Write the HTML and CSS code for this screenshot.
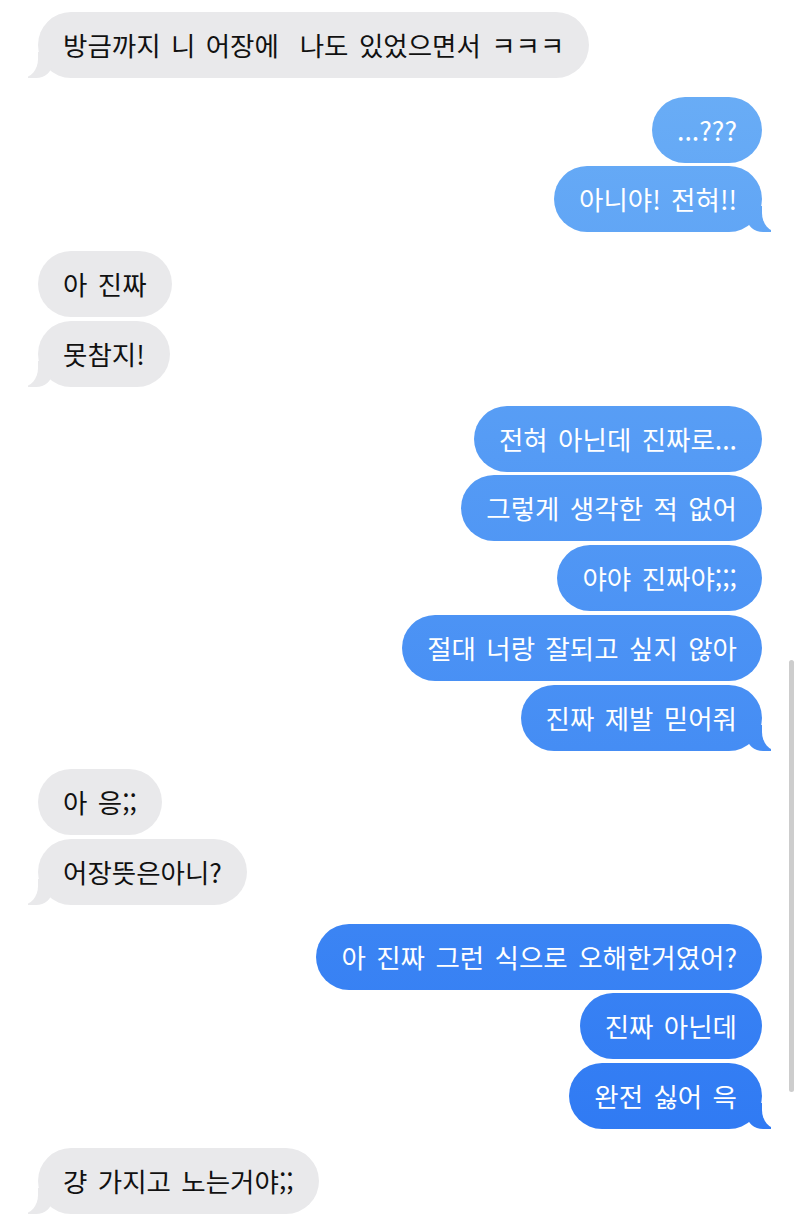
FILE: index.html
```html
<!DOCTYPE html>
<html lang="ko">
<head>
    <meta charset="UTF-8">
    <meta name="viewport" content="width=device-width, initial-scale=1.0">
    <title>메시지</title>
    <link rel="stylesheet" href="styles.css">
</head>
<body>
    <div class="chat">
        <div class="group them">
            <div class="bubble tail">방금까지 니 어장에&nbsp; 나도 있었으면서 ㅋㅋㅋ</div>
        </div>

        <div class="group me">
            <div class="bubble">...???</div>
            <div class="bubble tail">아니야! 전혀!!</div>
        </div>

        <div class="group them">
            <div class="bubble">아 진짜</div>
            <div class="bubble tail">못참지!</div>
        </div>

        <div class="group me">
            <div class="bubble">전혀 아닌데 진짜로...</div>
            <div class="bubble">그렇게 생각한 적 없어</div>
            <div class="bubble">야야 진짜야;;;</div>
            <div class="bubble">절대 너랑 잘되고 싶지 않아</div>
            <div class="bubble tail">진짜 제발 믿어줘</div>
        </div>

        <div class="group them">
            <div class="bubble">아 응;;</div>
            <div class="bubble tail">어장뜻은아니?</div>
        </div>

        <div class="group me">
            <div class="bubble">아 진짜 그런 식으로 오해한거였어?</div>
            <div class="bubble">진짜 아닌데</div>
            <div class="bubble tail">완전 싫어 윽</div>
        </div>

        <div class="group them">
            <div class="bubble tail">걍 가지고 노는거야;;</div>
        </div>
    </div>

    <div class="scrollbar"></div>
</body>
</html>
```

FILE: styles.css
```css
html, body {
    margin: 0;
    padding: 0;
    background: #fff;
    overflow: hidden;
}

body {
    font-family: "Noto Sans CJK KR", "Noto Sans", sans-serif;
    height: 1222px;
    position: relative;
}

.chat {
    display: flex;
    flex-direction: column;
    gap: 18.8px;
    padding: 12px 38px 0 38px;
}

.group {
    display: flex;
    flex-direction: column;
    gap: 3.7px;
}

.group.them {
    align-items: flex-start;
}

.group.me {
    align-items: flex-end;
}

.bubble {
    position: relative;
    font-size: 26.5px;
    line-height: 34px;
    word-spacing: 3px;
    padding: 16px 25px;
    border-radius: 33px;
    white-space: nowrap;
}

.them .bubble {
    background: #e9e9eb;
    color: #111;
}

.me .bubble {
    color: #fff;
    background: linear-gradient(#6eb1f6, #2b76f3) fixed;
}

/* tails */
.bubble.tail::before,
.bubble.tail::after {
    content: "";
    position: absolute;
    bottom: 0;
    height: 26px;
}

.me .bubble.tail::before {
    right: -9px;
    width: 24px;
    border-bottom-left-radius: 16px 14px;
    background: linear-gradient(#6eb1f6, #2b76f3) fixed;
}

.me .bubble.tail::after {
    right: -24px;
    width: 24px;
    background: #fff;
    border-bottom-left-radius: 16px 19px;
}

.them .bubble.tail::before {
    left: -10px;
    width: 24px;
    border-bottom-right-radius: 16px 14px;
    background: #e9e9eb;
}

.them .bubble.tail::after {
    left: -24px;
    width: 24px;
    background: #fff;
    border-bottom-right-radius: 16px 19px;
}

.scrollbar {
    position: absolute;
    top: 660px;
    right: 6px;
    width: 5px;
    height: 432px;
    border-radius: 3px;
    background: #cdcdcd;
}
```
